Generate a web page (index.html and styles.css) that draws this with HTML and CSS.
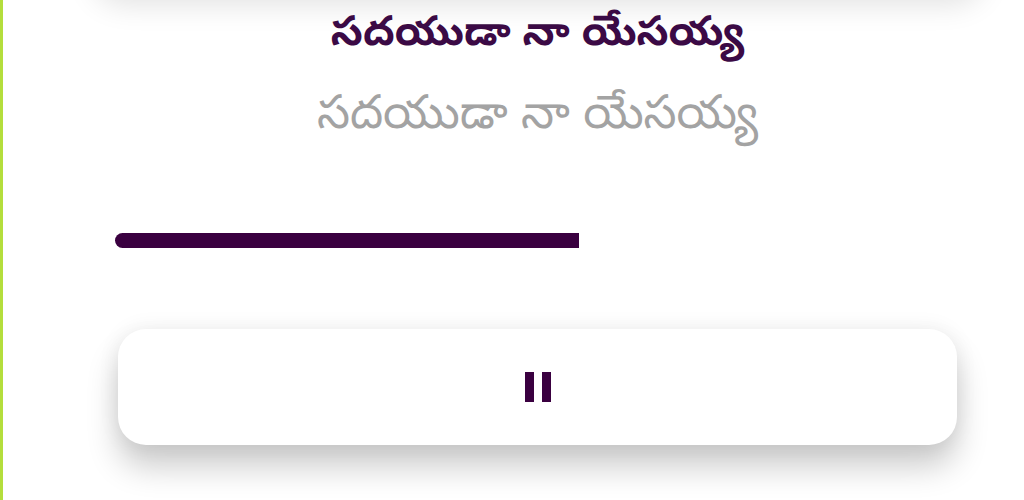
FILE: index.html
```html
<!DOCTYPE html>
<html lang="te">
<head>
<meta charset="utf-8">
<title>Player</title>
<link rel="stylesheet" href="styles.css">
</head>
<body>
<div class="page">
  <div class="prev-card"></div>
  <div class="content">
    <h1 class="title">సదయుడా నా యేసయ్య</h1>
    <p class="subtitle">సదయుడా నా యేసయ్య</p>
    <div class="track"><div class="fill" style="width:464px"></div></div>
    <button class="play-btn" aria-label="Pause">
      <span class="pause"><span class="bar"></span><span class="bar"></span></span>
    </button>
  </div>
</div>
</body>
</html>
```

FILE: styles.css
```css
html, body {
  margin: 0;
  padding: 0;
  background: #ffffff;
}
body {
  width: 1024px;
  height: 500px;
  overflow: hidden;
  font-family: "Noto Sans Telugu", "Noto Sans", sans-serif;
}
.page {
  height: 500px;
  border-left: 3px solid #b4de3c;
  box-sizing: border-box;
  overflow: hidden;
}
.prev-card {
  height: 60px;
  margin: -66px 40px 0 90px;
  background: #fff;
  border-radius: 30px;
  box-shadow: 0 10px 30px rgba(0, 0, 0, 0.12);
}
.content {
  display: flex;
  flex-direction: column;
  align-items: center;
  padding: 0 64px 0 112px;
}
.title {
  margin: 13px 0 0;
  font-size: 41.5px;
  font-weight: 700;
  line-height: 60px;
  color: #3b0a45;
}
.subtitle {
  margin: 19px 0 0;
  font-size: 47px;
  font-weight: 400;
  line-height: 66px;
  color: #a3a3a3;
}
.track {
  align-self: stretch;
  height: 15px;
  margin-top: 81px;
}
.fill {
  height: 15px;
  background: #3a0040;
  border-radius: 8px 0 0 8px;
}
.play-btn {
  align-self: stretch;
  margin: 81px 3px 0;
  height: 116px;
  border: none;
  border-radius: 28px;
  background: #fff;
  box-shadow: 0 22px 32px rgba(0, 0, 0, 0.2), 0 0 22px rgba(0, 0, 0, 0.07);
  display: flex;
  align-items: center;
  justify-content: center;
  padding: 0;
}
.pause {
  display: flex;
  gap: 8px;
}
.bar {
  width: 9px;
  height: 30px;
  background: #3a0040;
}
```
